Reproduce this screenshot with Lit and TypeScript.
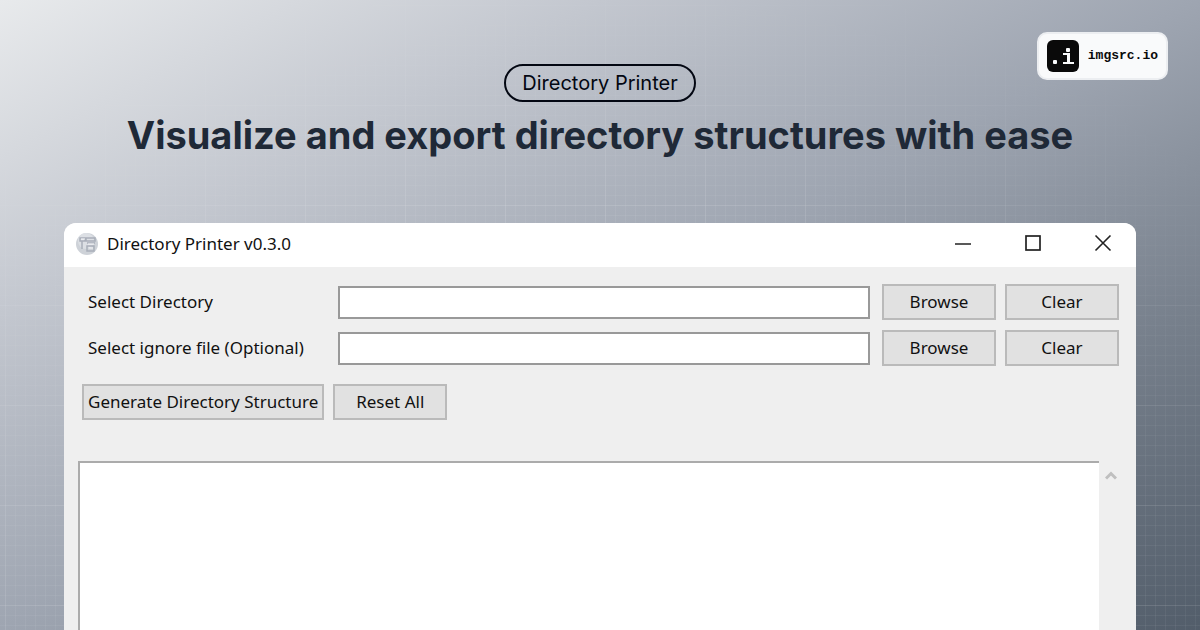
import { LitElement, html, css } from "lit";
import { customElement, property } from "lit/decorators.js";

@customElement("source-badge")
class SourceBadge extends LitElement {
  static styles = css`
    :host {
      display: block;
    }
    .badge {
      display: flex;
      align-items: center;
      gap: 9px;
      height: 48px;
      padding: 0 8px;
      box-sizing: border-box;
      border: 2px solid #eceef1;
      border-radius: 10px;
      background: #f9fafb;
      color: #0a0a0a;
      font: 700 13px/16px "Liberation Mono", monospace;
      text-decoration: none;
    }
    .mark {
      display: block;
      width: 32px;
      height: 32px;
    }
  `;

  render() {
    return html`
      <a class="badge" href="#">
        <svg class="mark" viewBox="0 0 32 32" aria-hidden="true">
          <rect width="32" height="32" rx="6" fill="#0a0a0a" />
          <g fill="#f9fafb">
            <rect x="6" y="20" width="4" height="4" rx="1" />
            <rect x="19" y="8" width="4" height="4" rx="1" />
            <rect x="16" y="13" width="7" height="2" />
            <rect x="20" y="13" width="3" height="10" />
            <rect x="16" y="22" width="11" height="2" />
          </g>
        </svg>
        <span>imgsrc.io</span>
      </a>
    `;
  }
}

@customElement("path-row")
class PathRow extends LitElement {
  @property() label = "";

  static styles = css`
    :host {
      display: block;
    }
    .row {
      display: grid;
      grid-template-columns: 244px minmax(0, 1fr) 114px 114px;
      align-items: center;
      column-gap: 9px;
    }
    label {
      padding-left: 6px;
      white-space: nowrap;
    }
    input {
      height: 33px;
      margin: 0 3px;
      box-sizing: border-box;
      border: 2px solid #999;
      border-radius: 0;
      background: #fff;
      font: inherit;
      min-width: 0;
    }
    button {
      height: 36px;
      padding: 0;
      border: 2px solid #bababa;
      border-radius: 0;
      background: #e1e1e1;
      color: #111;
      font: inherit;
    }
  `;

  render() {
    return html`
      <div class="row">
        <label for="path">${this.label}</label>
        <input id="path" type="text" />
        <button type="button">Browse</button>
        <button type="button">Clear</button>
      </div>
    `;
  }
}

@customElement("printer-window")
class PrinterWindow extends LitElement {
  static styles = css`
    :host {
      display: flex;
      flex-direction: column;
      overflow: hidden;
      border-radius: 12px 12px 0 0;
      background: #efefef;
      color: #111;
      font: 17px/24px "Noto Sans", sans-serif;
    }
    .titlebar {
      display: flex;
      align-items: center;
      height: 44px;
      padding: 0 12px 3px 12px;
      box-sizing: border-box;
      background: #fff;
      flex: none;
    }
    .app-icon {
      width: 24px;
      height: 24px;
      margin-right: 7px;
    }
    .title {
      flex: 1;
    }
    .controls {
      display: flex;
      gap: 28px;
    }
    .control {
      display: flex;
      align-items: center;
      justify-content: center;
      width: 42px;
      height: 32px;
      padding: 0 0 2px;
      border: 0;
      background: none;
    }
    .control svg {
      width: 18px;
      height: 18px;
    }
    .form {
      display: flex;
      flex-direction: column;
      gap: 10px;
      padding: 17px 17px 0 18px;
    }
    .actions {
      display: flex;
      gap: 9px;
      padding: 8px 0 41px;
    }
    .action {
      min-width: 114px;
      height: 36px;
      padding: 0 4px;
      border: 2px solid #bababa;
      background: #e1e1e1;
      color: #111;
      font: inherit;
    }
    .output {
      display: flex;
      flex: 1;
      min-height: 169px;
      padding: 0 14px;
    }
    textarea {
      flex: 1;
      min-width: 0;
      border: solid #ababab;
      border-width: 2px 0 0 2px;
      border-radius: 0;
      background: #fff;
      resize: none;
      font: inherit;
    }
    .scrollbar {
      width: 23px;
    }
    .scroll-up {
      display: flex;
      justify-content: center;
      width: 23px;
      padding: 9px 0;
      border: 0;
      background: none;
    }
    .scroll-up svg {
      width: 12px;
      height: 11px;
    }
  `;

  render() {
    return html`
      <header class="titlebar">
        <svg class="app-icon" viewBox="0 0 24 24" aria-hidden="true">
          <circle cx="11" cy="12" r="11" fill="#ced2d8" />
          <circle cx="10" cy="9" r="8" fill="#dcdfe4" />
          <path d="M4 6h5v3H4zM10 6h9v3h-9zM6 9v8M11 11h8M11 14v5h7v-5z" fill="none" stroke="#a9afb9" stroke-width="1.5" />
          <path d="M5 7h4M12 12h6M13 16h4" stroke="#f5f6f8" stroke-width="1" />
        </svg>
        <span class="title">Directory Printer v0.3.0</span>
        <div class="controls">
          <button class="control" type="button" aria-label="Minimize">
            <svg viewBox="0 0 18 18"><path d="M1 10h16" stroke="#222" stroke-width="1.6" /></svg>
          </button>
          <button class="control" type="button" aria-label="Maximize">
            <svg viewBox="0 0 18 18"><rect x="2" y="2" width="14" height="14" fill="none" stroke="#222" stroke-width="1.7" /></svg>
          </button>
          <button class="control" type="button" aria-label="Close">
            <svg viewBox="0 0 18 18"><path d="M1.5 1.5l15 15M16.5 1.5l-15 15" stroke="#222" stroke-width="1.6" /></svg>
          </button>
        </div>
      </header>
      <div class="form">
        <path-row label="Select Directory"></path-row>
        <path-row label="Select ignore file (Optional)"></path-row>
        <div class="actions">
          <button class="action" type="button">Generate Directory Structure</button>
          <button class="action" type="button">Reset All</button>
        </div>
      </div>
      <div class="output">
        <textarea aria-label="Directory structure"></textarea>
        <div class="scrollbar">
          <button class="scroll-up" type="button" aria-label="Scroll up">
            <svg viewBox="0 0 12 11"><path d="M1 8.5l5-5 5 5" fill="none" stroke="#bfbfbf" stroke-width="3" /></svg>
          </button>
        </div>
      </div>
    `;
  }
}

@customElement("app-root")
class AppRoot extends LitElement {
  static styles = css`
    :host {
      display: block;
      font-family: Inter, sans-serif;
    }
    .page {
      position: relative;
      display: flex;
      flex-direction: column;
      min-height: 100vh;
      padding: 64px 64px 0;
      box-sizing: border-box;
      background: linear-gradient(to bottom right, #e8eaec 0%, #c3c7cf 25%, #9ea5b1 50%, #767f8b 75%, #525d6a 100%);
    }
    .grid {
      position: absolute;
      inset: 0;
      background-image:
        linear-gradient(to right, rgba(255, 255, 255, 0.16) 1px, transparent 1px),
        linear-gradient(to bottom, rgba(255, 255, 255, 0.16) 1px, transparent 1px),
        linear-gradient(to right, rgba(255, 255, 255, 0.12) 1px, transparent 1px),
        linear-gradient(to bottom, rgba(255, 255, 255, 0.12) 1px, transparent 1px);
      background-size: 100px 100px, 100px 100px, 10px 10px, 10px 10px;
      background-position: 5px 5px;
      -webkit-mask-image: radial-gradient(ellipse 75% 110% at 50% 100%, #000 20%, transparent 100%);
      mask-image: radial-gradient(ellipse 75% 110% at 50% 100%, #000 20%, transparent 100%);
    }
    .badge {
      position: absolute;
      top: 32px;
      right: 32px;
    }
    .hero {
      position: relative;
      display: flex;
      flex-direction: column;
      align-items: center;
      gap: 8px;
      padding-bottom: 63px;
      text-align: center;
    }
    .tag {
      padding: 3px 16px;
      border: 2px solid #030712;
      border-radius: 19px;
      color: #030712;
      font-size: 20px;
      line-height: 28px;
    }
    h1 {
      margin: 0;
      color: #1f2937;
      font-size: 38px;
      line-height: 50px;
      font-weight: 700;
    }
    .window {
      position: relative;
      flex: 1;
    }
  `;

  render() {
    return html`
      <main class="page">
        <div class="grid"></div>
        <source-badge class="badge"></source-badge>
        <div class="hero">
          <span class="tag">Directory Printer</span>
          <h1>Visualize and export directory structures with ease</h1>
        </div>
        <printer-window class="window"></printer-window>
      </main>
    `;
  }
}
